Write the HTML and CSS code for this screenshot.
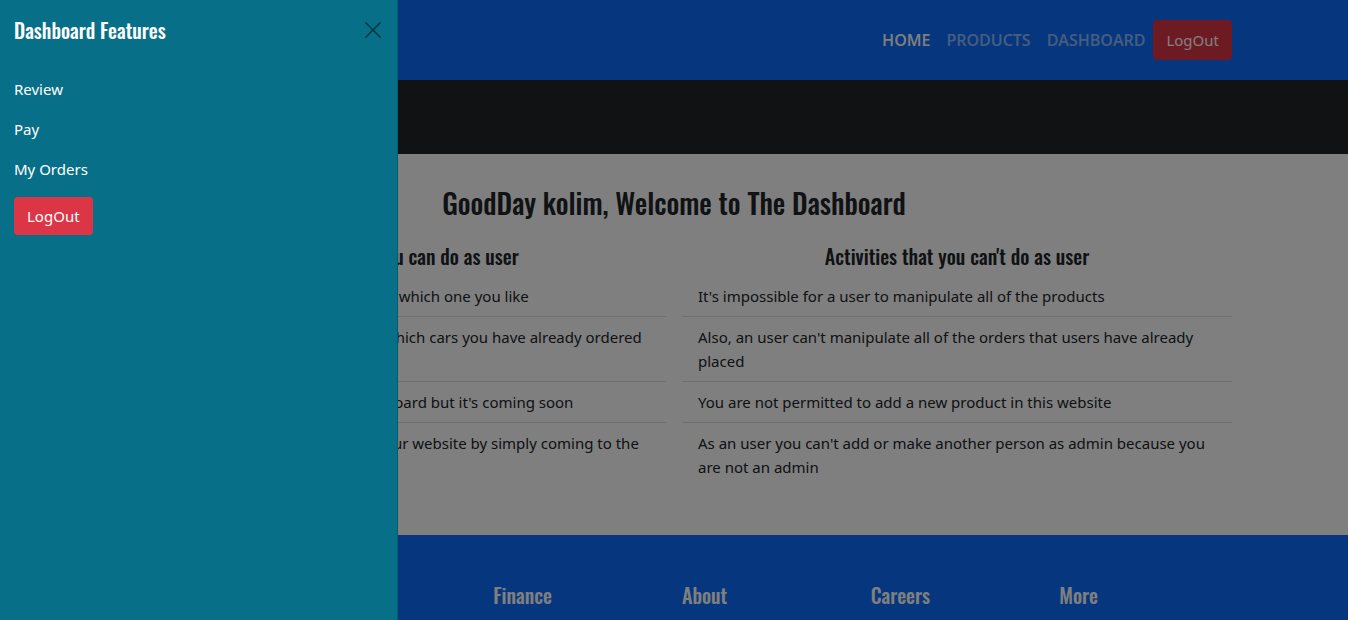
FILE: index.html
```html
<!DOCTYPE html>
<html lang="en">
<head>
<meta charset="utf-8">
<meta name="viewport" content="width=device-width, initial-scale=1">
<title>Dashboard</title>
<link rel="stylesheet" href="styles.css">
</head>
<body>
<header class="navbar">
  <nav class="container nav">
    <a class="nav-link active" href="#">HOME</a>
    <a class="nav-link" href="#">PRODUCTS</a>
    <a class="nav-link" href="#">DASHBOARD</a>
    <button class="btn btn-nav" type="button">LogOut</button>
  </nav>
</header>
<div class="toolbar"></div>
<main class="container main">
  <h1 class="welcome">GoodDay kolim, Welcome to The Dashboard</h1>
  <div class="columns">
    <section>
      <h2 class="column-title">Activities that you can do as user</h2>
      <ul class="list">
        <li class="item">You can order any of the products for which one you like</li>
        <li class="item">You can go to My Orders and check which cars you have already ordered from the website</li>
        <li class="item">Payment is not available in the dashboard but it's coming soon</li>
        <li class="item">You can always post a review about our website by simply coming to the dashboard review</li>
      </ul>
    </section>
    <section>
      <h2 class="column-title">Activities that you can't do as user</h2>
      <ul class="list">
        <li class="item">It's impossible for a user to manipulate all of the products</li>
        <li class="item">Also, an user can't manipulate all of the orders that users have already placed</li>
        <li class="item">You are not permitted to add a new product in this website</li>
        <li class="item">As an user you can't add or make another person as admin because you are not an admin</li>
      </ul>
    </section>
  </div>
</main>
<footer class="footer">
  <div class="container footer-grid">
    <h3 class="footer-title footer-finance">Finance</h3>
    <h3 class="footer-title">About</h3>
    <h3 class="footer-title">Careers</h3>
    <h3 class="footer-title">More</h3>
  </div>
</footer>
<div class="backdrop"></div>
<aside class="drawer" aria-labelledby="drawer-title">
  <div class="drawer-header">
    <h2 class="drawer-title" id="drawer-title">Dashboard Features</h2>
    <button class="close" type="button" aria-label="Close">
      <svg width="16" height="16" viewBox="0 0 16 16" fill="none" stroke="currentColor" stroke-width="1.6" stroke-linecap="round"><path d="M.8.8l14.4 14.4M15.2.8L.8 15.2"/></svg>
    </button>
  </div>
  <nav class="drawer-nav">
    <a class="drawer-link" href="#">Review</a>
    <a class="drawer-link" href="#">Pay</a>
    <a class="drawer-link" href="#">My Orders</a>
    <button class="btn btn-drawer" type="button">LogOut</button>
  </nav>
</aside>
</body>
</html>
```
FILE: styles.css
```css
* { box-sizing: border-box; }
html { height: 100%; overflow: hidden; }
body {
  display: flex;
  flex-direction: column;
  min-height: 100%;
  margin: 0;
  background: #fff;
  color: #212529;
  font: 15px/24px "Segoe UI", "Noto Sans", sans-serif;
}
h1, h2, h3, ul { margin: 0; padding: 0; }
h1, h2, h3 { font-family: Oswald, "Liberation Sans Narrow", sans-serif; font-weight: 500; }
a { color: inherit; text-decoration: none; }
.container { width: 100%; max-width: 1140px; margin: 0 auto; padding: 0 12px; }
.navbar { background: #0d6efd; padding: 20px 0; }
.nav { display: flex; justify-content: flex-end; align-items: center; }
.nav-link {
  padding: 8px;
  color: rgba(255, 255, 255, .55);
  font-family: "Segoe UI", "Open Sans", sans-serif;
  font-size: 16px;
  font-weight: 600;
}
.nav-link.active { color: #fff; }
.btn {
  padding: 7px 13px;
  border: 0;
  border-radius: 4px;
  background: #dc3545;
  color: #fff;
  font: inherit;
}
.btn-nav { padding: 8px 13px; }
.toolbar { height: 74px; background: #212529; }
.main { padding-top: 31px; padding-bottom: 56px; }
.welcome { margin-bottom: 23px; font-size: 28px; line-height: 36px; text-align: center; }
.columns { display: grid; grid-template-columns: 1fr 1fr; gap: 16px; }
.column-title { margin-bottom: 10px; font-size: 20px; line-height: 24px; text-align: center; }
.list { display: grid; grid-template-rows: 39px 65px 41px 56px; list-style: none; }
.item { padding: 6px 16px 8px; border-bottom: 1px solid rgba(0, 0, 0, .125); }
.item + .item { padding-top: 8px; }
.item:last-child { border-bottom: 0; }
.footer { flex: 1; padding: 48px 0 12px; background: #0d6efd; color: #fff; }
.footer-grid { display: grid; grid-template-columns: repeat(6, 1fr); gap: 16px; }
.footer-finance { grid-column: 3; }
.footer-title { font-size: 20px; line-height: 24px; }
.backdrop { position: fixed; inset: 0; background: rgba(0, 0, 0, .5); }
.drawer {
  position: fixed;
  inset: 0 auto 0 0;
  width: 398px;
  max-width: 100%;
  padding: 16px 14px;
  border-right: 1px solid #075a70;
  background: #086f88;
  color: #fff;
}
.drawer-header { display: flex; justify-content: space-between; align-items: center; margin-bottom: 29px; }
.drawer-title { font-size: 20px; line-height: 28px; }
.close { display: flex; padding: 2px; border: 0; background: none; color: #043744; }
.drawer-nav { display: flex; flex-direction: column; align-items: flex-start; }
.drawer-link { padding: 4px 0 12px; }
.btn-drawer { margin-top: 4px; }
```
